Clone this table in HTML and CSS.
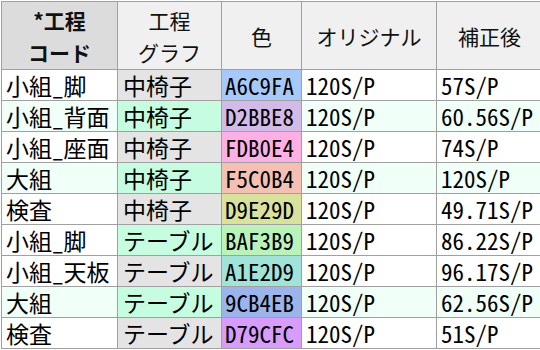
FILE: index.html
```html
<!DOCTYPE html>
<html lang="ja">
<head>
<meta charset="utf-8">
<link rel="stylesheet" href="styles.css">
</head>
<body>
<table class="grid">
  <colgroup>
    <col class="c1"><col class="c2"><col class="c3"><col class="c4"><col class="c5">
  </colgroup>
  <thead>
    <tr>
      <th class="key">*工程<br>コード</th>
      <th>工程<br>グラフ</th>
      <th>色</th>
      <th>オリジナル</th>
      <th>補正後</th>
    </tr>
  </thead>
  <tbody>
    <tr><td>小組_脚</td><td class="g">中椅子</td><td style="background:#A6C9FA">A6C9FA</td><td>120S/P</td><td>57S/P</td></tr>
    <tr class="alt"><td>小組_背面</td><td class="m">中椅子</td><td style="background:#D2BBE8">D2BBE8</td><td>120S/P</td><td>60.56S/P</td></tr>
    <tr><td>小組_座面</td><td class="g">中椅子</td><td style="background:#FDB0E4">FDB0E4</td><td>120S/P</td><td>74S/P</td></tr>
    <tr class="alt"><td>大組</td><td class="m">中椅子</td><td style="background:#F5C0B4">F5C0B4</td><td>120S/P</td><td>120S/P</td></tr>
    <tr><td>検査</td><td class="g">中椅子</td><td style="background:#D9E29D">D9E29D</td><td>120S/P</td><td>49.71S/P</td></tr>
    <tr><td>小組_脚</td><td class="m">テーブル</td><td style="background:#BAF3B9">BAF3B9</td><td>120S/P</td><td>86.22S/P</td></tr>
    <tr><td>小組_天板</td><td class="g">テーブル</td><td style="background:#A1E2D9">A1E2D9</td><td>120S/P</td><td>96.17S/P</td></tr>
    <tr class="alt"><td>大組</td><td class="m">テーブル</td><td style="background:#9CB4EB">9CB4EB</td><td>120S/P</td><td>62.56S/P</td></tr>
    <tr><td>検査</td><td class="g">テーブル</td><td style="background:#D79CFC">D79CFC</td><td>120S/P</td><td>51S/P</td></tr>
  </tbody>
</table>
</body>
</html>
```
FILE: styles.css
```css
html, body {
  margin: 0;
  padding: 0;
  background: #ffffff;
}
body {
  padding: 1px 0 0 1px;
  font-family: "Noto Sans CJK JP", sans-serif;
  font-feature-settings: "hwid" 1;
  color: #000;
}
.grid {
  border-collapse: collapse;
  table-layout: fixed;
  width: 541px;
  border-top: 1px solid #a0a0a0;
  border-left: 1px solid #a0a0a0;
}
.c1 { width: 116px; }
.c2 { width: 104px; }
.c3 { width: 80px; }
.c4 { width: 135px; }
.c5 { width: 106px; }
.grid th, .grid td {
  border-right: 1px solid #a0a0a0;
  border-bottom: 1px solid #a0a0a0;
  padding: 0;
  overflow: hidden;
  white-space: nowrap;
}
.grid th {
  height: 67px;
  background: #f0f0f0;
  font-family: "Noto Sans CJK JP", sans-serif;
  font-feature-settings: normal;
  font-weight: 400;
  font-size: 21px;
  line-height: 32px;
  text-align: center;
  color: #111;
}
.grid th.key {
  background: #dcdcdc;
  font-weight: 700;
}
.grid td {
  height: 30px;
  font-size: 23px;
  line-height: 30px;
  padding-left: 4px;
  text-align: left;
}
.grid td:nth-child(2) { padding-left: 5px; }
.grid td:nth-child(3) { padding-left: 3px; }
.grid tr.alt td { background: #f0fff8; }
.grid td.g, .grid tr.alt td.g { background: #e4e4e4; }
.grid td.m, .grid tr.alt td.m { background: #c6fde0; }
```
